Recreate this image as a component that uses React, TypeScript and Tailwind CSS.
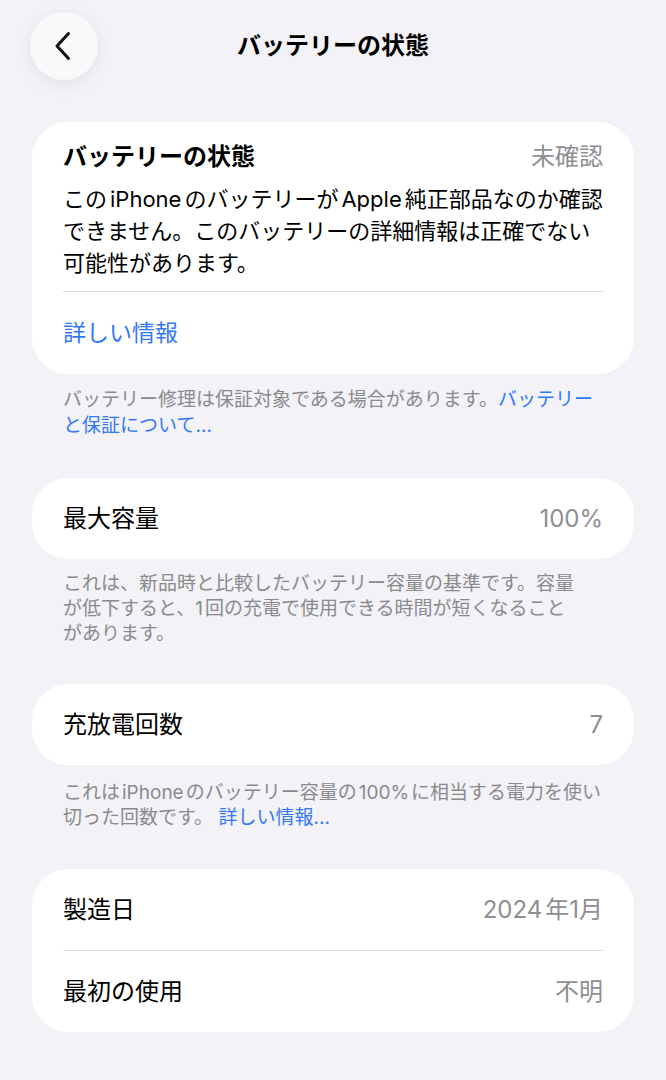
import { ReactNode } from "react";

const font = { fontFamily: '"Inter", "Noto Sans CJK JP", sans-serif' };

// iOS puts a little air between Latin runs and Japanese text
const L = ({ children, tight = false }: { children: ReactNode; tight?: boolean }) => (
  <span className={tight ? "mx-[2px]" : "mx-[3px]"}>{children}</span>
);

const Row = ({ label, value }: { label: string; value: ReactNode }) => (
  <div className="flex h-[81px] items-center justify-between px-[31px]">
    <span className="text-[24px] text-black">{label}</span>
    <span className="text-[24px] text-[#8e8e93]">{value}</span>
  </div>
);

const Caption = ({ children, className = "" }: { children: ReactNode; className?: string }) => (
  <p className={`whitespace-nowrap pl-[31px] text-[19px] leading-[25px] text-[#8a8a8e] ${className}`}>{children}</p>
);

const Card = ({ children, className = "" }: { children: ReactNode; className?: string }) => (
  <div className={`rounded-[36px] bg-white ${className}`}>{children}</div>
);

const App = () => {
  return (
    <div className="min-h-[1080px] bg-[#f2f2f7]" style={font}>
      {/* Nav bar */}
      <header className="grid h-[92px] grid-cols-[98px_1fr_98px] items-center">
        <button
          aria-label="戻る"
          className="ml-[30px] flex h-[68px] w-[68px] items-center justify-center rounded-full bg-[#f9f9fb] shadow-[0_4px_18px_rgba(0,0,0,0.07)]"
        >
          <svg width="20" height="30" viewBox="0 0 20 30" fill="none" className="-ml-[2px]">
            <path d="M15.5 2.5 L4 15 L15.5 27.5" stroke="#111" strokeWidth="3" strokeLinecap="round" strokeLinejoin="round" />
          </svg>
        </button>
        <h1 className="text-center text-[24px] font-bold text-black">バッテリーの状態</h1>
        <div />
      </header>

      <main className="px-[32px] pt-[30px] pb-10">
        {/* Battery health */}
        <Card>
          <div className="px-[31px] pt-[19px] pb-[12px]">
            <div className="flex items-center justify-between leading-[32px]">
              <span className="text-[24px] font-bold text-black">バッテリーの状態</span>
              <span className="text-[24px] text-[#8e8e93]">未確認</span>
            </div>
            <p className="mt-[10px] whitespace-nowrap text-[22px] leading-[32px] text-black">
              この<L>iPhone</L>のバッテリーが<L>Apple</L>純正部品なのか確認
              <br />
              できません。このバッテリーの詳細情報は正確でない
              <br />
              可能性があります。
            </p>
          </div>
          <div className="mx-[31px] h-px bg-[#dedee2]" />
          <div className="flex h-[82px] items-center px-[31px]">
            <span className="text-[23px] text-[#3478f6]">詳しい情報</span>
          </div>
        </Card>
        <Caption className="mt-[13px] leading-[26px]">
          バッテリー修理は保証対象である場合があります。<span className="text-[#3478f6]">バッテリー</span>
          <br />
          <span className="text-[#3478f6]">と保証について...</span>
        </Caption>

        {/* Max capacity */}
        <Card className="mt-[39px]">
          <Row label="最大容量" value="100%" />
        </Card>
        <Caption className="mt-[12px]">
          これは、新品時と比較したバッテリー容量の基準です。容量
          <br />
          が低下すると、<span className="mr-[2px]">1</span>回の充電で使用できる時間が短くなること
          <br />
          があります。
        </Caption>

        {/* Cycle count */}
        <Card className="mt-[38px]">
          <Row label="充放電回数" value="7" />
        </Card>
        <Caption className="mt-[15px]">
          これは<L tight>iPhone</L>のバッテリー容量の<L tight>100%</L>に相当する電力を使い
          <br />
          切った回数です。 <span className="text-[#3478f6]">詳しい情報...</span>
        </Caption>

        {/* Dates */}
        <Card className="mt-[39px]">
          <Row
            label="製造日"
            value={
              <>
                2024<span className="ml-[3px]">年</span>1月
              </>
            }
          />
          <div className="mx-[31px] h-px bg-[#dedee2]" />
          <Row label="最初の使用" value="不明" />
        </Card>
      </main>
    </div>
  );
};

export default App;
